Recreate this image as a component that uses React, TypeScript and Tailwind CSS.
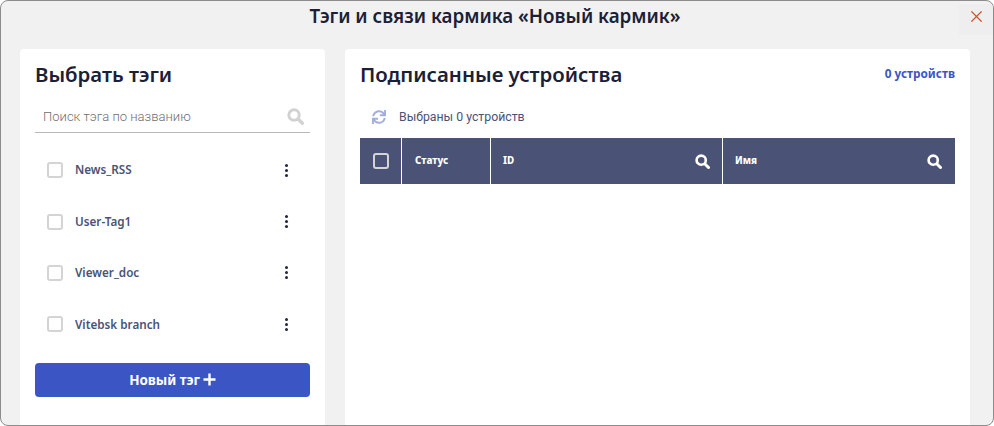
import { FaSync } from 'react-icons/fa';
import { X } from 'lucide-react';

const tags = ['News_RSS', 'User-Tag1', 'Viewer_doc', 'Vitebsk branch'];

function SearchIcon({ size, className }: { size: number; className?: string }) {
  return (
    <svg width={size} height={size} viewBox="0 0 16 16" fill="none" stroke="currentColor" className={className}>
      <circle cx="6.6" cy="6.6" r="4.9" strokeWidth="2.8" />
      <line x1="10.6" y1="10.6" x2="14.4" y2="14.4" strokeWidth="3.2" strokeLinecap="round" />
    </svg>
  );
}

function TagRow({ name }: { name: string }) {
  return (
    <div className="flex h-[51.4px] items-center pr-[22px] pl-3">
      <span className="h-4 w-4 rounded-[3px] border-2 border-[#d4d4d4] bg-white" />
      <span className="ml-3 flex-1 text-[11.7px] font-semibold text-[#4a5375]">{name}</span>
      <span className="flex flex-col gap-[2px]">
        <i className="h-[3px] w-[3px] rounded-full bg-[#22263f]" />
        <i className="h-[3px] w-[3px] rounded-full bg-[#22263f]" />
        <i className="h-[3px] w-[3px] rounded-full bg-[#22263f]" />
      </span>
    </div>
  );
}

export default function App() {
  return (
    <div className="flex h-[426px] w-[994px] flex-col overflow-hidden rounded-[8px] border border-[#8c8c8c] bg-[#f1f1f1] font-['Noto_Sans',sans-serif]">
      <div className="relative h-[48px] shrink-0">
        <h1 className="pt-[2px] pr-[4px] text-center text-[18.8px] leading-[26px] font-semibold text-[#1b2036]">
          Тэги и связи кармика «Новый кармик»
        </h1>
        <button className="absolute top-[3px] right-0 flex h-[31px] w-[34px] justify-center bg-[#eeeeee] pt-[3px] text-[#d2512f]">
          <X size={19} strokeWidth={1.5} />
        </button>
      </div>
      <div className="flex min-h-0 flex-1 gap-5 pr-[23px] pl-[19px]">
        <section className="w-[305px] rounded-t-[4px] bg-white px-[15px]">
          <h2 className="pt-[10px] text-[20.4px] leading-[30px] font-semibold text-[#1b2036]">Выбрать тэги</h2>
          <div className="mt-[12px] flex h-[32px] items-center border-b border-[#b9b9b9] pr-[6px] pl-2">
            <span className="flex-1 font-['Roboto',sans-serif] text-[13.05px] font-light text-[#6f6f6f]">
              Поиск тэга по названию
            </span>
            <SearchIcon size={17} className="text-[#d2d2d2]" />
          </div>
          <div className="mt-[11.5px]">
            {tags.map((t) => (
              <TagRow key={t} name={t} />
            ))}
          </div>
          <button className="mt-[12.5px] flex h-[34px] w-full items-center justify-center gap-[3px] rounded-[4px] bg-[#3c55c5] text-[13.4px] font-bold text-white">
            Новый тэг
            <svg width="13" height="13" viewBox="0 0 13 13" fill="none" stroke="currentColor" strokeWidth="2.4">
              <path d="M6.5 0.5v12M0.5 6.5h12" />
            </svg>
          </button>
        </section>
        <section className="flex-1 rounded-t-[4px] bg-white px-[15px]">
          <div className="flex items-center justify-between pt-[10px]">
            <h2 className="text-[20.4px] leading-[30px] font-semibold text-[#1b2036]">Подписанные устройства</h2>
            <span className="text-[11.8px] font-bold text-[#3c55c5]">0 устройств</span>
          </div>
          <div className="mt-[16px] flex h-[24px] items-center pl-[12px]">
            <FaSync size={14} className="text-[#a3aee0]" />
            <span className="ml-[13px] font-['Roboto',sans-serif] text-[12.3px] text-[#4a5375]">Выбраны 0 устройств</span>
          </div>
          <div className="mt-[9px] flex h-[46px] bg-[#4a5375] text-[9.8px] font-extrabold text-white">
            <div className="flex w-[42px] items-center justify-center border-r border-white pl-[1px]">
              <span className="mb-[1px] h-4 w-4 rounded-[3px] border-2 border-[#d4d4d4]" />
            </div>
            <div className="flex w-[89px] items-center border-r border-white pl-[13px]">Статус</div>
            <div className="flex w-[232px] items-center justify-between border-r border-white pr-[12px] pl-[12px]">
              ID <SearchIcon size={15} />
            </div>
            <div className="flex flex-1 items-center justify-between pr-[13px] pl-[12px]">
              Имя <SearchIcon size={15} />
            </div>
          </div>
        </section>
      </div>
    </div>
  );
}
